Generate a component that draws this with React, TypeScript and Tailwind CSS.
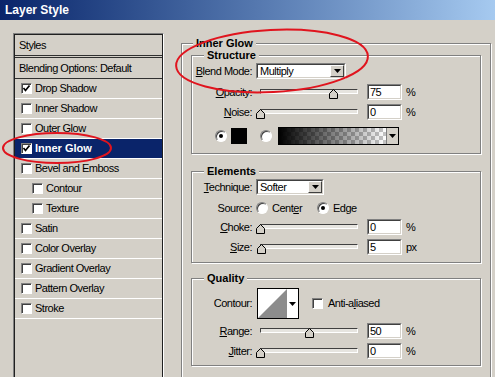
import React from "react";

function Check({ checked }: { checked?: boolean }) {
  return (
    <div className="relative w-[11px] h-[11px] shrink-0 bg-white border border-t-[#808080] border-l-[#808080] border-b-white border-r-[#ffffff] shadow-[inset_1px_1px_0_#404040]">
      {checked && (
        <svg className="absolute left-0 top-0" width="9" height="9" viewBox="0 0 9 9">
          <path d="M1.5 4 L3.5 6.5 L7.5 1.5" fill="none" stroke="#000" strokeWidth="1.7" />
        </svg>
      )}
    </div>
  );
}

function Radio({ checked }: { checked?: boolean }) {
  return (
    <div className="relative w-[12px] h-[12px] shrink-0 rounded-full bg-white border border-t-[#808080] border-l-[#808080] border-b-white border-r-[#ffffff] shadow-[inset_1px_1px_0_#404040]">
      {checked && <div className="absolute left-[3px] top-[3px] w-[4px] h-[4px] rounded-full bg-black" />}
    </div>
  );
}

function Arrow() {
  return (
    <svg width="7" height="4" viewBox="0 0 7 4">
      <path d="M0 0H7L3.5 4Z" fill="#000" />
    </svg>
  );
}

function Slider({ value }: { value: number }) {
  const left = 4 + value * 98 - 4.5;
  return (
    <div className="relative w-[104px] h-[16px] shrink-0 ml-[4px]">
      <div className="absolute left-[4px] top-[5px] w-[98px] h-[5px] border border-t-[#404040] border-l-[#404040] border-b-white border-r-[#ffffff] bg-[#e6e4df]" />
      <svg className="absolute top-[5px]" style={{ left }} width="9" height="10" viewBox="0 0 9 10">
        <path d="M4.5 0.5 L8.5 4.5 L8.5 9.5 L0.5 9.5 L0.5 4.5 Z" fill="#d4d0c8" stroke="#000" />
      </svg>
    </div>
  );
}

function NumBox({ v }: { v: string }) {
  return (
    <div className="ml-[7px] w-[35px] h-[16px] shrink-0 border border-t-[#808080] border-l-[#808080] border-b-white border-r-[#ffffff]">
      <div className="h-full border border-t-[#404040] border-l-[#404040] border-b-[#d4d0c8] border-r-[#d4d0c8] bg-white flex items-center pl-[1px]">
        {v}
      </div>
    </div>
  );
}

function Select({ wide, text }: { wide?: boolean; text: string }) {
  return (
    <div
      className={`${wide ? "w-[90px]" : "w-[68px]"} ml-[4px] h-[16px] shrink-0 border border-t-[#808080] border-l-[#808080] border-b-white border-r-[#ffffff]`}
    >
      <div className="h-full flex border border-t-[#404040] border-l-[#404040] border-b-[#d4d0c8] border-r-[#d4d0c8] bg-white">
        <span className="flex-1 pl-[2px] flex items-center">{text}</span>
        <div className="w-[14px] h-full bg-[#d4d0c8] border border-t-white border-l-white border-b-[#404040] border-r-[#404040] flex items-center justify-center">
          <Arrow />
        </div>
      </div>
    </div>
  );
}

function Label({ children }: { children: React.ReactNode }) {
  return <span className="w-[60px] shrink-0 text-right">{children}</span>;
}

function U({ children }: { children: React.ReactNode }) {
  return <span className="underline underline-offset-[1px]">{children}</span>;
}

function Group({
  legend,
  className,
  children,
}: {
  legend: string;
  className: string;
  children: React.ReactNode;
}) {
  return (
    <div
      className={`relative w-[290px] border border-[#808080] shadow-[inset_1px_1px_0_#ffffff,1px_1px_0_#ffffff] ${className}`}
    >
      <span className="absolute -top-[7px] left-[12px] px-[3px] bg-[#d4d0c8] font-bold tracking-normal leading-[13px]">
        {legend}
      </span>
      {children}
    </div>
  );
}

const styles: { name: string; checked?: boolean; selected?: boolean; indent?: boolean }[] = [
  { name: "Drop Shadow", checked: true },
  { name: "Inner Shadow" },
  { name: "Outer Glow" },
  { name: "Inner Glow", checked: true, selected: true },
  { name: "Bevel and Emboss" },
  { name: "Contour", indent: true },
  { name: "Texture", indent: true },
  { name: "Satin" },
  { name: "Color Overlay" },
  { name: "Gradient Overlay" },
  { name: "Pattern Overlay" },
  { name: "Stroke" },
];

export default function App() {
  return (
    <div className="relative w-[495px] h-[377px] overflow-hidden bg-[#d4d0c8] font-['Liberation_Sans',Arial,sans-serif] text-[11px] leading-none text-black tracking-[-0.5px]">
      <div className="h-[20px] bg-linear-to-r from-[#0a246a] to-[#a6caf0] flex items-center pl-[5px] text-white font-bold text-[12px] tracking-normal">
        Layer Style
      </div>
      <div className="flex items-start">
        {/* Left styles list */}
        <div className="ml-[13px] mt-[13px] w-[151px] h-[400px] shrink-0 border border-t-[#808080] border-l-[#808080] border-b-white border-r-[#ffffff]">
          <div className="h-full border border-[#202020]">
            <div className="h-[20px] flex items-center pl-[4px]">Styles</div>
            <div className="h-[3px] border-t border-b border-[#303030]" />
            <div className="h-[21px] flex items-center pl-[4px] border-b border-[#303030]">Blending Options: Default</div>
            {styles.map((s) => (
              <div
                key={s.name}
                className={`h-[20px] flex items-center border-b border-white ${s.indent ? "pl-[17px]" : "pl-[6px]"} ${
                  s.selected ? "bg-[#0a246a] text-white font-bold tracking-normal" : ""
                }`}
              >
                <Check checked={s.checked} />
                <span className="ml-[3px]">{s.name}</span>
              </div>
            ))}
          </div>
        </div>

        {/* Right Inner Glow group */}
        <div className="relative ml-[17px] mt-[23px] w-[310px] h-[400px] shrink-0 border border-[#808080] shadow-[inset_1px_1px_0_#ffffff,1px_1px_0_#ffffff] pl-[9px] pt-[11px]">
          <span className="absolute -top-[7px] left-[11px] px-[3px] bg-[#d4d0c8] font-bold tracking-normal leading-[13px]">
            Inner Glow
          </span>

          <Group legend="Structure" className="pt-[7px] pb-[8px]">
            <div className="flex items-center h-[16px]">
              <Label>
                <U>B</U>lend Mode:
              </Label>
              <Select wide text="Multiply" />
            </div>
            <div className="flex items-center h-[16px] mt-[5px]">
              <Label>
                <U>O</U>pacity:
              </Label>
              <Slider value={0.75} />
              <NumBox v="75" />
              <span className="ml-[4px]">%</span>
            </div>
            <div className="flex items-center h-[16px] mt-[4px]">
              <Label>
                <U>N</U>oise:
              </Label>
              <Slider value={0} />
              <NumBox v="0" />
              <span className="ml-[4px]">%</span>
            </div>
            <div className="flex items-center h-[18px] mt-[7px] pl-[23px]">
              <Radio checked />
              <div className="ml-[4px] w-[16px] h-[16px] bg-black" />
              <div className="ml-[13px]">
                <Radio />
              </div>
              <div className="ml-[6px] w-[121px] h-[18px] flex border border-black">
                <div className="flex-1 [background-image:linear-gradient(to_right,#000,rgba(0,0,0,0)),repeating-conic-gradient(#c4c4c4_0%_25%,#ffffff_0%_50%)] [background-size:100%_100%,8px_8px]" />
                <div className="w-[12px] bg-[#d4d0c8] border-l border-[#808080] flex items-center justify-center">
                  <Arrow />
                </div>
              </div>
            </div>
          </Group>

          <Group legend="Elements" className="mt-[17px] pt-[7px] pb-[7px]">
            <div className="flex items-center h-[16px]">
              <Label>
                <U>T</U>echnique:
              </Label>
              <Select text="Softer" />
            </div>
            <div className="flex items-center h-[16px] mt-[5px]">
              <Label>Source:</Label>
              <div className="ml-[4px]">
                <Radio />
              </div>
              <span className="w-[49px] pl-[4px]">
                Cent<U>e</U>r
              </span>
              <Radio checked />
              <span className="ml-[4px]">
                Ed<U>g</U>e
              </span>
            </div>
            <div className="flex items-center h-[16px] mt-[3px]">
              <Label>
                <U>C</U>hoke:
              </Label>
              <Slider value={0} />
              <NumBox v="0" />
              <span className="ml-[4px]">%</span>
            </div>
            <div className="flex items-center h-[16px] mt-[4px]">
              <Label>
                <U>S</U>ize:
              </Label>
              <Slider value={0.02} />
              <NumBox v="5" />
              <span className="ml-[4px]">px</span>
            </div>
          </Group>

          <Group legend="Quality" className="mt-[15px] pt-[9px] pb-[6px]">
            <div className="flex items-center h-[31px]">
              <Label>Contour:</Label>
              <div className="ml-[5px] w-[42px] h-[31px] flex border border-black bg-white">
                <svg width="29" height="29" viewBox="0 0 29 29">
                  <polygon points="0,29 29,0 29,29" fill="#8c8c8c" />
                </svg>
                <div className="flex-1 flex items-center justify-center">
                  <Arrow />
                </div>
              </div>
              <div className="ml-[13px]">
                <Check />
              </div>
              <span className="ml-[5px]">
                Anti-a<U>l</U>iased
              </span>
            </div>
            <div className="flex items-center h-[16px] mt-[4px]">
              <Label>
                <U>R</U>ange:
              </Label>
              <Slider value={0.5} />
              <NumBox v="50" />
              <span className="ml-[4px]">%</span>
            </div>
            <div className="flex items-center h-[16px] mt-[4px]">
              <Label>
                <U>J</U>itter:
              </Label>
              <Slider value={0} />
              <NumBox v="0" />
              <span className="ml-[4px]">%</span>
            </div>
          </Group>
        </div>
      </div>

      <svg className="absolute inset-0 pointer-events-none" width="495" height="377" viewBox="0 0 495 377">
        <ellipse cx="57" cy="148" rx="54" ry="15" fill="none" stroke="#e0141e" strokeWidth="2" />
        <ellipse
          cx="272"
          cy="61"
          rx="96"
          ry="31"
          fill="none"
          stroke="#e0141e"
          strokeWidth="2"
          transform="rotate(-3 272 61)"
        />
      </svg>
    </div>
  );
}
